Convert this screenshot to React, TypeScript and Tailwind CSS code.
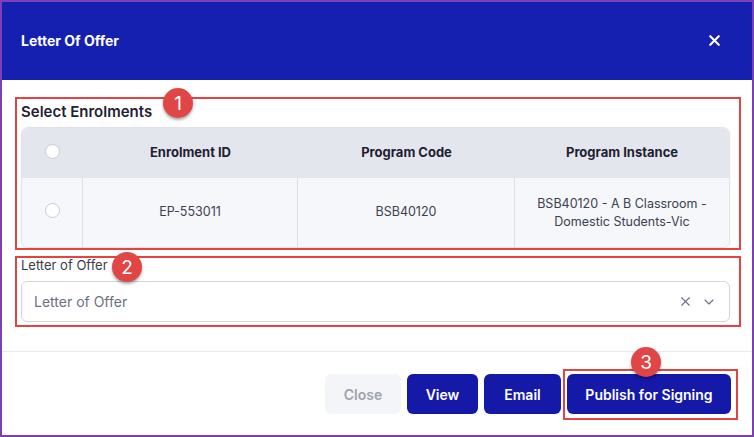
import { X, ChevronDown } from "lucide-react";

const Badge = ({ n, x, y }: { n: number; x: string; y: string }) => (
  <div
    className={`absolute ${x} ${y} w-[30px] h-[30px] rounded-full bg-[#e04646] text-white text-[19px] leading-none flex items-center justify-center shadow-[0_2px_3px_rgba(0,0,0,0.35)]`}
  >
    {n}
  </div>
);

const Radio = () => (
  <span className="block w-[15px] h-[15px] rounded-full border border-[#c8cbd4] bg-white" />
);

const App = () => {
  return (
    <div className="relative w-[754px] h-[437px] bg-white font-['Inter',sans-serif]">
      <div className="w-full h-full border-2 border-[#7b40b4] flex flex-col">
        <div className="h-[78px] bg-[#1520b0] flex items-center justify-between pl-[19px] pr-[29px] pb-[2px] shrink-0">
          <h1 className="text-white text-[14px] font-bold">Letter Of Offer</h1>
          <X className="w-[17px] h-[17px] text-white" strokeWidth={3} />
        </div>

        <div className="flex flex-col pl-[19px] pr-[22px] pt-[22px]">
          <h2 className="text-[15px] leading-[20px] font-semibold text-[#1f2230]">Select Enrolments</h2>

          <div className="mt-[5px] rounded-[7px] border border-[#e1e3ea] overflow-hidden shadow-[0_1px_2px_rgba(0,0,0,0.08)]">
            <div className="grid grid-cols-[61px_215px_217px_1fr] h-[50px] bg-[#e4e6ee] text-[13px] font-bold text-[#1e2030]">
              <div className="flex justify-center items-center pb-[4px]">
                <Radio />
              </div>
              <div className="flex items-center justify-center">Enrolment ID</div>
              <div className="flex items-center justify-center">Program Code</div>
              <div className="flex items-center justify-center">Program Instance</div>
            </div>
            <div className="grid grid-cols-[61px_215px_217px_1fr] h-[69px] bg-[#f5f7fa] text-[12.5px] text-[#3b3f51]">
              <div className="flex justify-center items-center pb-[4px] border-r border-[#dcdee5]">
                <Radio />
              </div>
              <div className="flex items-center justify-center border-r border-[#dcdee5]">EP-553011</div>
              <div className="flex items-center justify-center border-r border-[#dcdee5]">BSB40120</div>
              <div className="flex items-center justify-center text-center leading-[18px] px-2">
                BSB40120 - A B Classroom -<br />Domestic Students-Vic
              </div>
            </div>
          </div>

          <label className="mt-[9px] text-[13px] leading-[16px] text-[#3a3d4a]">Letter of Offer</label>
          <div className="mt-[8px] h-[41px] rounded-[6px] border border-[#d3d5dd] flex items-center justify-between pl-[12px] pr-[12px]">
            <span className="text-[14px] text-[#6b6f80]">Letter of Offer</span>
            <div className="flex items-center gap-[8px] text-[#6b6f80]">
              <X className="w-[15px] h-[15px]" strokeWidth={1.7} />
              <ChevronDown className="w-[16px] h-[16px]" strokeWidth={1.7} />
            </div>
          </div>
        </div>

        <div className="mt-[29px] border-t border-[#e8e9ee] flex justify-end items-start gap-[6px] pt-[22px] pr-[21px] flex-1">
          <button className="h-[40px] w-[76px] rounded-[6px] bg-[#f3f5f9] text-[#a0a3af] text-[14px] font-semibold">Close</button>
          <button className="h-[40px] w-[71px] rounded-[6px] bg-[#1519a8] text-white text-[14px] font-semibold">View</button>
          <button className="h-[40px] w-[77px] rounded-[6px] bg-[#1519a8] text-white text-[14px] font-semibold">Email</button>
          <button className="h-[40px] w-[164px] rounded-[6px] bg-[#1519a8] text-white text-[14px] font-semibold">Publish for Signing</button>
        </div>
      </div>

      <div className="absolute left-[15px] top-[97px] w-[726px] h-[153px] border-[2.5px] border-[#e24444]" />
      <div className="absolute left-[15px] top-[256px] w-[726px] h-[71px] border-[2.5px] border-[#e24444]" />
      <div className="absolute left-[563px] top-[369px] w-[175px] h-[51px] border-[2.5px] border-[#e24444]" />

      <Badge n={1} x="left-[163px]" y="top-[88px]" />
      <Badge n={2} x="left-[112px]" y="top-[252px]" />
      <Badge n={3} x="left-[631px]" y="top-[347px]" />
    </div>
  );
};

export default App;
